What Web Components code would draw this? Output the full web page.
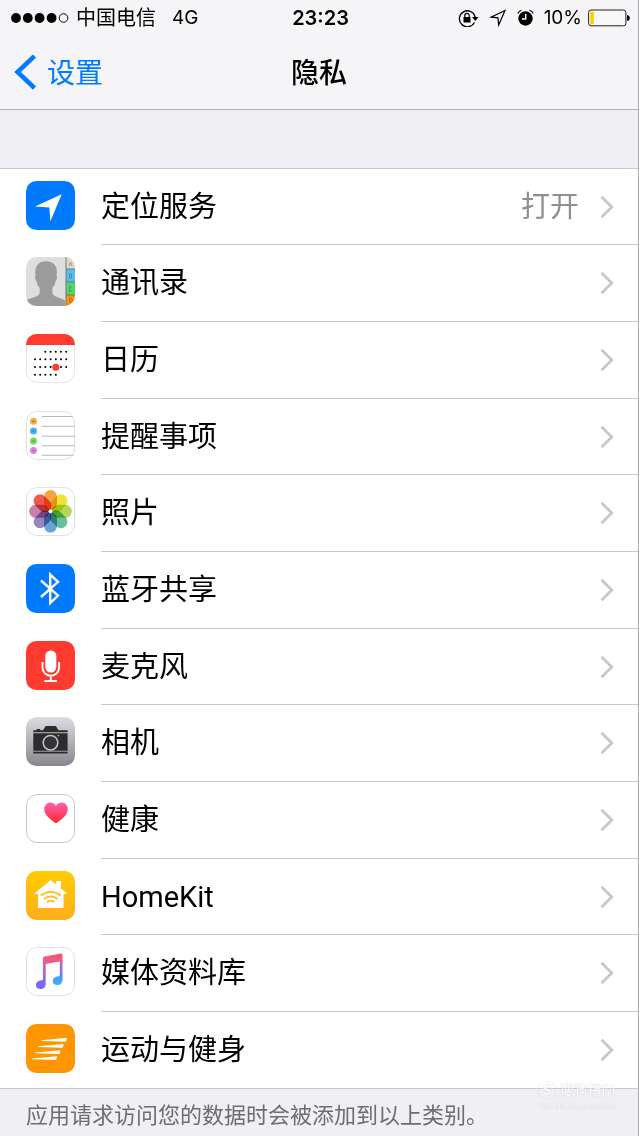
<!DOCTYPE html>
<html lang="zh-CN">
<head>
<meta charset="utf-8">
<meta name="viewport" content="width=device-width, initial-scale=1">
<title>隐私</title>
<style>
  html { background: #efeff4; }
  body { margin: 0; font-family: Inter, "Noto Sans CJK SC", sans-serif; color: #000; }
</style>
</head>
<body>
<privacy-page></privacy-page>

<script>
const define = (name, html, setup) => {
  const template = document.createElement('template');
  template.innerHTML = html;
  customElements.define(name, class extends HTMLElement {
    constructor() {
      super();
      this.attachShadow({ mode: 'open' }).append(template.content.cloneNode(true));
    }
    connectedCallback() { if (setup) setup(this, this.shadowRoot); }
  });
};

/* App icons, each drawn on a 49 x 49 tile */
const tile = (fill, stroke) =>
  `<rect x="${stroke ? .5 : 0}" y="${stroke ? .5 : 0}" width="${stroke ? 48 : 49}" height="${stroke ? 48 : 49}" rx="10.5" fill="${fill}" ${stroke ? `stroke="${stroke}"` : ''}/>`;
const clip = '<clipPath id="c"><rect width="49" height="49" rx="10.5"/></clipPath>';
const calendarDots = () => {
  let s = '';
  [[17.7,19.3,5],[25.3,9,7],[33,9,7],[40.7,9,5]].forEach(([y, x, n]) => {
    for (let i = 0; i < n; i++) s += `<circle cx="${x + i * 5.2}" cy="${y}" r="1"/>`;
  });
  return s;
};
const petals = () => ['#f7941d','#ecdf12','#a5cf3c','#4bb58a','#4f93d0','#8372b5','#c0689c','#ee3b33']
  .map((c, i) => `<rect x="18" y="3" width="13" height="20" rx="6.5" fill="${c}" opacity=".85" style="mix-blend-mode:multiply" transform="rotate(${i * 45} 24.5 24.3)"/>`).join('');
const ICONS = {
  location: tile('#007aff') + '<path d="M35.7 13.2 9 25.6 23.4 26.4 24.3 40.5Z" fill="#fff"/>',
  contacts: clip + `<g clip-path="url(#c)"><path fill="#dedede" d="M0 0h49v49H0z"/>
    <path fill="#9b9b9b" d="M0 49v-5.5c3-2.4 10-2.6 13-6 1-1.500 1-4 .5-7-1.700-1.500-2.500-3.500-2.900-6-1.500-1-1.900-5-1-6.300C8 10 12 4.300 20 4.300s12.500 5.700 10.500 13.900c.9 1.300.4 5.300-1 6.300-.4 2.500-1.200 4.500-2.900 6-.5 3-.5 5.500.5 7 3 3.400 9 3.600 12 6V49z"/>
    <path fill="#ddd6d0" d="M40 0h9v12h-9z"/><path fill="#55bef0" d="M40 12h9v13h-9z"/><path fill="#4cd964" d="M40 25h9v13h-9z"/><path fill="#ff9500" d="M40 38h9v11h-9z"/>
    <path d="M40 0v49M40 12h9M40 25h9M40 38h9" stroke="#777" fill="none"/>
    <path d="M43 9l1.500-3.500L46 9M43.500 17v4h2v-4zM46 30h-2.500v4H46M43.500 41v4h1.500l1-1v-2l-1-1z" stroke="#555" stroke-width=".7" fill="none" opacity=".7"/></g>`,
  calendar: clip + tile('#fff', '#e4e4e4') + `<path clip-path="url(#c)" fill="#ff3b30" d="M0 0h49v11H0z"/>${calendarDots()}<circle cx="29.800" cy="33.200" r="3.500" fill="#ff3b30"/>`,
  reminders: tile('#fff', '#e2e2e2') + `<path d="M16 5.500h30.500M16 15.300h33M16 25.200h33M16 34.800h33M16 44.300h31.500" stroke="#b9b9bd"/>
    <circle cx="7.500" cy="10.300" r="3.500" fill="#ffab3d"/><circle cx="7.500" cy="20" r="3.500" fill="#42b4f5"/><circle cx="7.500" cy="30" r="3.500" fill="#76d95b"/><circle cx="7.500" cy="39.500" r="3.500" fill="#d08ae0"/>
    <g fill="#555" opacity=".4"><circle cx="7.500" cy="10.300" r="1.200"/><circle cx="7.500" cy="20" r="1.200"/><circle cx="7.500" cy="30" r="1.200"/><circle cx="7.500" cy="39.500" r="1.200"/></g>`,
  photos: tile('#fff', '#e2e2e2') + `<g style="isolation:isolate">${petals()}</g><circle cx="24.500" cy="24.300" r="1.800" fill="#fff"/>`,
  bluetooth: tile('#007aff') + '<path d="M15 16.500 32 31.500 24.200 39V10.500L32 17.800 15 33" fill="none" stroke="#fff" stroke-width="2.400"/>',
  microphone: tile('#ff3b30') + '<rect x="19.300" y="9.500" width="11" height="22" rx="5.500" fill="#fff"/><path d="M16.500 21v5.500a8.300 8.300 0 0 0 16.600 0V21M24.800 35v5M18.300 40h12.500" fill="none" stroke="#fff" stroke-width="1.900"/>',
  camera: '<linearGradient id="g" x2="0" y2="1"><stop stop-color="#dcdde0"/><stop offset="1" stop-color="#87888d"/></linearGradient>' + tile('url(#g)') +
    `<path fill="#2c2c2e" d="M7.300 13.300h3l.6-1.300h3l.6 1.300h2.600l2-3.600q.4-.7 1.400-.7h8.500q1 0 1.400.7l2 3.600h9.200v2H7.300zM7.300 16.300h34.300v17.500H7.300zM7.300 34.800h34.300v1.800H7.300z"/>
    <circle cx="24.500" cy="25.700" r="7.300" fill="#333335" stroke="#c4c4c8" stroke-width="1.500"/><circle cx="32.300" cy="18.600" r=".9" fill="#e0a63a"/>`,
  health: '<linearGradient id="g" x2="0" y2="1"><stop stop-color="#ff5fb3"/><stop offset="1" stop-color="#ff2a2c"/></linearGradient>' + tile('#fff', '#c9c9c9') +
    '<path fill="url(#g)" d="M30 29.500C25 26 18.300 21.300 18.300 15.300c0-4 2.700-6.800 6-6.800 2.500 0 4.600 1.300 5.700 3.500 1.100-2.200 3.200-3.500 5.700-3.500 3.300 0 6 2.800 6 6.800C41.700 21.300 35 26 30 29.500z"/>',
  homekit: '<linearGradient id="g" x2="0" y2="1"><stop stop-color="#ffcc00"/><stop offset="1" stop-color="#ffae1c"/></linearGradient>' + tile('url(#g)') +
    `<path fill="#fff" d="M24.800 9 30 13.300V10h5v7.400l6.500 5.300H37.500V37H12V22.700H8z"/>
    <path d="M14.700 24.500q10-7.300 20 0M17.900 28q6.800-5.200 13.600 0M21 31.200q3.700-2.600 7.400 0" fill="none" stroke="#ffbd0d" stroke-width="1.800"/>`,
  music: '<linearGradient id="g" gradientUnits="userSpaceOnUse" x1="26" y1="7" x2="24" y2="42"><stop stop-color="#f85a66"/><stop offset=".25" stop-color="#e95c94"/><stop offset=".6" stop-color="#a564ee"/><stop offset="1" stop-color="#6a6cfb"/></linearGradient><linearGradient id="b" gradientUnits="userSpaceOnUse" x1="30" y1="8" x2="30" y2="38"><stop stop-color="#f85a66"/><stop offset=".3" stop-color="#c960b8"/><stop offset=".65" stop-color="#5a8cf8"/><stop offset="1" stop-color="#35b4fa"/></linearGradient>' + tile('#fff', '#e2e2e2') +
    `<path fill="url(#b)" d="M33.800 13h2.700v20c0 3-2.300 5-5.300 5-2.500 0-4.500-1.500-4.500-4s2-4.300 4.500-4.500c1.700-.1 2.600-.5 2.600-2z"/>
    <path fill="url(#g)" d="M17 11.500q0-1.700 1.500-2L35 6.600q1.500-.2 1.500 1.300V14L19.700 17v20c0 3-2.300 5-5.300 5-2.500 0-4.600-1.500-4.600-4s2-4.300 4.500-4.500C16 33.400 17 33 17 31.500z"/>`,
  motion: tile('#ff9500') + '<path fill="#fff" d="M15.500 16.200 41 13.700 40 17.700 15.500 17zM12 22.300 37.800 19.900 36.600 23.700 12 23.100zM9 28.500 34.600 26.200 33.400 30 9 29.300zM6 34.500 31.200 32.200 30 36 6 35.300z"/>'
};

define('app-icon', `
  <style>
    :host { display: block; width: 49px; height: 49px; }
    svg { display: block; }
  </style>
  <div></div>`, (host, root) => {
    root.querySelector('div').innerHTML =
      `<svg width="49" height="49" viewBox="0 0 49 49" aria-hidden="true">${ICONS[host.getAttribute('name')]}</svg>`;
  });

define('status-bar', `
  <style>
    :host { display: grid; grid-template-columns: 1fr auto 1fr; align-items: center; height: 36px; padding: 0 8px 0 11px; font-size: 19px; line-height: 24px; }
    .left, .right { display: flex; align-items: center; }
    .left { gap: 7px; }
    .net { margin-left: 9px; }
    .carrier { font-size: 20px; }
    time { font-size: 20px; font-weight: 600; }
    .right { justify-content: flex-end; gap: 10px; }
    .power { display: flex; align-items: center; gap: 6px; }
    svg { display: block; }
  </style>
  <div class="left">
    <svg width="58" height="12" viewBox="0 0 58 12" aria-hidden="true"><circle cx="5" cy="6" r="4.900"/><circle cx="16.800" cy="6" r="4.900"/><circle cx="28.600" cy="6" r="4.900"/><circle cx="40.600" cy="6" r="4.900"/><circle cx="52.500" cy="6" r="4.300" fill="none" stroke="#000"/></svg>
    <span class="carrier">中国电信</span>
    <span class="net">4G</span>
  </div>
  <time>23:23</time>
  <div class="right">
    <svg width="21" height="18" viewBox="0 0 21 18" aria-hidden="true"><path d="M16.500 13.500A8 8 0 1 1 17.200 8" fill="none" stroke="#000" stroke-width="1.300"/><path d="M14 8h6.500l-3.200 4z"/><path d="M5.500 8h7v5.500h-7z"/><path d="M6.800 8V6.500a2.200 2.200 0 0 1 4.400 0V8" fill="none" stroke="#000" stroke-width="1.200"/></svg>
    <svg width="18" height="18" viewBox="0 0 18 18" aria-hidden="true"><path d="M16 1.500 2 8.200 9 8.900 9.700 16z" fill="none" stroke="#000" stroke-width="1.200"/></svg>
    <svg width="17" height="18" viewBox="0 0 17 18" aria-hidden="true"><circle cx="8.500" cy="9.500" r="7.200"/><path d="M.7 4.500Q2 2 4.500 1.200M16.300 4.500Q15 2 12.500 1.200" fill="none" stroke="#000" stroke-width="1.200"/><path d="M8.700 5v5H5" fill="none" stroke="#fff" stroke-width="1.400"/></svg>
    <div class="power">
      <span>10%</span>
      <svg width="42" height="18" viewBox="0 0 42 18" aria-hidden="true"><rect x=".6" y="1" width="37.300" height="15.800" rx="2.500" fill="#f8f8f8" stroke="#222"/><path fill="#fc0" d="M2.300 2.700h3.500v12.500H2.300z"/><path d="M39 6q2.800.5 2.800 3T39 12z"/></svg>
    </div>
  </div>`);

define('nav-bar', `
  <style>
    :host { display: grid; grid-template-columns: 1fr auto 1fr; align-items: center; height: 73px; font-size: 28px; line-height: 40px; }
    button { justify-self: start; display: flex; align-items: center; gap: 10px; padding: 0 0 0 14px; border: 0; background: none; color: #007aff; font: inherit; cursor: pointer; }
    h1 { margin: 0; font-size: 28px; font-weight: 500; }
    svg { display: block; }
  </style>
  <button type="button">
    <svg width="23" height="36" viewBox="0 0 23 36" aria-hidden="true"><path d="M20.500 1 3.500 17 20.500 33" fill="none" stroke="#007aff" stroke-width="4.500"/></svg>
    <slot name="back"></slot>
  </button>
  <h1><slot></slot></h1>`);

define('settings-row', `
  <style>
    :host { display: block; }
    a { display: flex; align-items: stretch; height: 100%; padding-left: 26px; gap: 26px; color: inherit; text-decoration: none; }
    app-icon { align-self: center; margin-bottom: 4px; }
    .body { flex: 1; display: flex; align-items: center; gap: 21px; padding-right: 24px; border-bottom: 1px solid #c8c7cc; }
    :host(:last-of-type) .body { border-color: transparent; }
    .label { flex: 1; }
    .value { color: #8e8e93; }
  </style>
  <a href="#">
    <span class="body">
      <span class="label"><slot></slot></span>
      <span class="value"></span>
      <svg width="14" height="24" viewBox="0 0 14 24" aria-hidden="true"><path d="M1.500 1.800 11.800 12 1.500 22.200" fill="none" stroke="#c7c7cc" stroke-width="2.800"/></svg>
    </span>
  </a>`, (host, root) => {
    const icon = document.createElement('app-icon');
    icon.setAttribute('name', host.getAttribute('icon'));
    root.querySelector('a').prepend(icon);
    root.querySelector('.value').textContent = host.getAttribute('value') || '';
  });

define('settings-list', `
  <style>
    :host { display: block; background: #fff; border: solid #c8c7cc; border-width: 1px 0; font-family: Roboto, "Noto Sans CJK SC", sans-serif; font-size: 29px; line-height: 42px; }
    ::slotted(settings-row) { height: 77px; }
    ::slotted(settings-row:nth-of-type(3n+1)), ::slotted(settings-row:last-of-type) { height: 76px; }
  </style>
  <slot></slot>`);

define('site-mark', `
  <style>
    :host { display: grid; grid-template-columns: auto auto; gap: 0 3px; align-items: center; color: #fff; opacity: .8; font-size: 14px; line-height: 18px; text-shadow: 0 0 1px #aaa; }
    b { width: 18px; height: 18px; border-radius: 9px; box-shadow: 0 0 1px #bbb; text-align: center; }
    small { grid-column: 1 / 3; font-size: 9px; line-height: 14px; }
  </style>
  <b>S</b><span>搜狗指南</span><small>zhinan.sogou.com</small>`);

define('privacy-page', `
  <style>
    :host { display: block; position: relative; min-height: 100vh; box-sizing: border-box; border-right: 1px solid #a9a9ad; background: #efeff4; overflow: hidden; }
    header { background: #f5f5f7; border-bottom: 1px solid #b2b2b6; }
    main { padding-top: 58px; }
    p { margin: 0; padding: 10px 26px 0; color: #6d6d72; font-size: 22px; line-height: 32px; }
    footer { position: relative; }
    site-mark { position: absolute; right: 22px; top: -8px; }
  </style>
  <header>
    <status-bar></status-bar>
    <nav-bar><span slot="back">设置</span>隐私</nav-bar>
  </header>
  <main>
    <settings-list>
      <settings-row icon="location" value="打开">定位服务</settings-row>
      <settings-row icon="contacts">通讯录</settings-row>
      <settings-row icon="calendar">日历</settings-row>
      <settings-row icon="reminders">提醒事项</settings-row>
      <settings-row icon="photos">照片</settings-row>
      <settings-row icon="bluetooth">蓝牙共享</settings-row>
      <settings-row icon="microphone">麦克风</settings-row>
      <settings-row icon="camera">相机</settings-row>
      <settings-row icon="health">健康</settings-row>
      <settings-row icon="homekit">HomeKit</settings-row>
      <settings-row icon="music">媒体资料库</settings-row>
      <settings-row icon="motion">运动与健身</settings-row>
    </settings-list>
  </main>
  <footer>
    <p>应用请求访问您的数据时会被添加到以上类别。</p>
    <site-mark></site-mark>
  </footer>`);
</script>
</body>
</html>
